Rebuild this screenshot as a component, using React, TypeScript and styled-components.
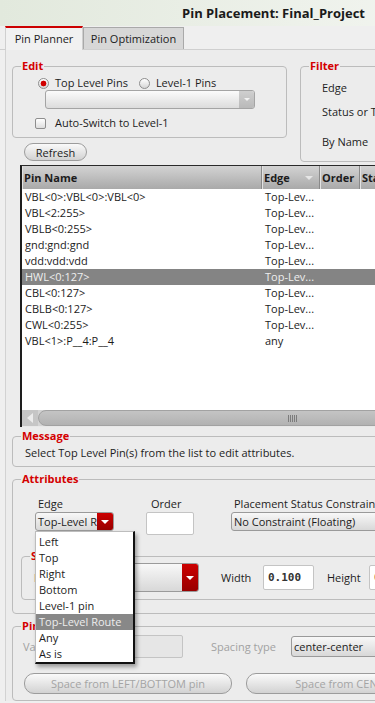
import React from "react";
import styled, { createGlobalStyle } from "styled-components";

const GlobalStyle = createGlobalStyle`
  html, body {
    margin: 0;
    padding: 0;
    background: #efefef;
    overflow: hidden;
  }
  body {
    font-family: "Open Sans", "DejaVu Sans", sans-serif;
    font-size: 11px;
    line-height: 14px;
    color: #1c1c1c;
  }
`;

const Screen = styled.div`
  width: 375px;
  height: 703px;
  overflow: hidden;
  background: #efefef;
`;

const Window = styled.div`
  width: 480px;
`;

const TitleBar = styled.div`
  height: 26px;
  display: flex;
  align-items: center;
  padding-left: 182px;
  background: linear-gradient(to right, #e2e9dd, #f4f6f2);
  font-size: 13px;
  font-weight: 700;
  white-space: nowrap;
  color: #1a1a1a;
`;

const TabStrip = styled.div`
  display: flex;
  align-items: flex-end;
  height: 23px;
  padding-left: 5px;
  border-bottom: 1px solid #cfcfcf;
`;

const Tab = styled.div<{ $active?: boolean }>`
  box-sizing: border-box;
  height: ${(p) => (p.$active ? "24px" : "22px")};
  margin-bottom: ${(p) => (p.$active ? "-1px" : "0")};
  width: ${(p) => (p.$active ? "78px" : "101px")};
  display: flex;
  align-items: center;
  justify-content: center;
  white-space: nowrap;
  font-size: 11px;
  background: ${(p) => (p.$active ? "#f1f1f1" : "#d7d7d7")};
  border: 1px solid ${(p) => (p.$active ? "#cfcfcf" : "#a9a9a9")};
  border-top: ${(p) => (p.$active ? "2px solid #cc0000" : "1px solid #a9a9a9")};
  border-bottom: none;
`;

const Panel = styled.div`
  margin-left: 5px;
  border-left: 1px solid #d2d2d2;
  padding: 9px 0 0 6px;
  background: #ececec;
`;

const TopArea = styled.div`
  display: grid;
  grid-template-columns: 275px 1fr;
  column-gap: 13px;
`;

const Group = styled.fieldset<{ $indent?: number }>`
  margin: 0;
  margin-left: ${(p) => p.$indent ?? 0}px;
  min-width: 0;
  padding: 0;
  border: 1px solid #bcbcbc;
  border-radius: 4px;
`;

const Legend = styled.legend`
  margin-left: 8px;
  padding: 0 1px;
  color: #d40000;
  font-weight: 700;
  font-size: 11px;
  line-height: 14px;
`;

const EditBody = styled.div`
  padding: 3px 0 8px 0;
`;

const RadioRow = styled.div`
  display: flex;
  align-items: center;
  height: 14px;
  padding-left: 25px;
`;

const RadioDot = styled.span<{ $on?: boolean }>`
  box-sizing: border-box;
  width: 11px;
  height: 11px;
  border-radius: 50%;
  border: 1px solid #8e8e8e;
  margin-right: 6px;
  background: ${(p) =>
    p.$on
      ? "radial-gradient(circle, #d00000 0 2.6px, transparent 3.2px), linear-gradient(#ffffff, #d6d6d6)"
      : "linear-gradient(#ffffff, #d6d6d6)"};
`;

const RadioLabel = styled.span`
  margin-right: 11px;
`;

const GrayCombo = styled.div`
  box-sizing: border-box;
  margin-left: 32px;
  width: 210px;
  height: 19px;
  border: 1px solid #a4a4a4;
  border-radius: 3px;
  background: linear-gradient(#fbfbfb, #dcdcdc);
  display: flex;
  justify-content: flex-end;
  overflow: hidden;
`;

const GrayArrow = styled.div`
  width: 15px;
  background: linear-gradient(#cfcfcf, #b9b9b9);
  display: flex;
  align-items: center;
  justify-content: center;
  &::after {
    content: "";
    border-left: 3px solid transparent;
    border-right: 3px solid transparent;
    border-top: 3px solid #f2f2f2;
  }
`;

const CheckRow = styled.label`
  display: flex;
  align-items: center;
  height: 12px;
  margin-top: 8px;
  padding-left: 22px;
`;

const CheckBox = styled.span`
  box-sizing: border-box;
  width: 11px;
  height: 11px;
  border: 1px solid #8e8e8e;
  border-radius: 2px;
  background: linear-gradient(#ffffff, #dedede);
  margin-right: 9px;
`;

const PillButton = styled.button<{ $w: number; $disabled?: boolean }>`
  box-sizing: border-box;
  width: ${(p) => p.$w}px;
  height: ${(p) => (p.$disabled ? "21px" : "18px")};
  padding: 0;
  border: 1px solid #9c9c9c;
  border-radius: 10px;
  background: linear-gradient(#fafafa, #d2d2d2);
  font-family: inherit;
  font-size: 11px;
  color: ${(p) => (p.$disabled ? "#a4a4a4" : "#1c1c1c")};
  white-space: nowrap;
  overflow: hidden;
`;

const RefreshWrap = styled.div`
  margin: 5px 0 0 12px;
`;

const FilterBody = styled.div`
  display: grid;
  grid-template-rows: 24px 24px 36px;
  align-items: center;
  padding: 3px 0 1px 21px;
`;

const Table = styled.div`
  margin: 3px 0 0 8px;
  border-top: 1px solid #2a2a2a;
  border-left: 2px solid #1e1e1e;
  background: #ffffff;
`;

const TableGrid = styled.div`
  display: grid;
  grid-template-columns: 240px 58px 40px 1fr;
`;

const HeadCell = styled.div<{ $sort?: boolean }>`
  height: 23px;
  display: flex;
  align-items: center;
  justify-content: space-between;
  padding-left: 2px;
  padding-right: ${(p) => (p.$sort ? "6px" : "0")};
  font-weight: 700;
  background: linear-gradient(#d3d3d3, #a9a9a9);
  border-right: 1px solid #8a8a8a;
  box-shadow: inset 1px 0 0 #e2e2e2;
`;

const SortArrow = styled.span`
  border-left: 4px solid transparent;
  border-right: 4px solid transparent;
  border-top: 4px solid #e6e6e6;
`;

const BodyCell = styled.div<{ $sel?: boolean }>`
  height: 16px;
  line-height: 16px;
  padding-left: 3px;
  white-space: nowrap;
  overflow: hidden;
  background: ${(p) => (p.$sel ? "#848484" : "#ffffff")};
  color: ${(p) => (p.$sel ? "#eeeeee" : "#1c1c1c")};
`;

const TableEmpty = styled.div`
  height: 61px;
`;

const HScroll = styled.div`
  display: flex;
  height: 16px;
  background: #d4d4d4;
  border-bottom: 1px solid #e8e8e8;
`;

const ScrollLeft = styled.div`
  width: 16px;
  background: #c6c6c6;
  display: flex;
  align-items: center;
  justify-content: center;
  &::after {
    content: "";
    border-top: 5px solid transparent;
    border-bottom: 5px solid transparent;
    border-right: 6px solid #ececec;
  }
`;

const Thumb = styled.div`
  flex: 1;
  box-sizing: border-box;
  border: 1px solid #a2a2a2;
  border-radius: 8px 0 0 8px;
  background: linear-gradient(#c4c4c4, #b2b2b2);
  display: flex;
  align-items: center;
  padding-left: 249px;
`;

const Grip = styled.span`
  width: 9px;
  height: 7px;
  background: repeating-linear-gradient(to right, #7c7c7c 0 1px, transparent 1px 2px);
`;

const MessageGroup = styled(Group)`
  margin-top: 2px;
`;

const MessageText = styled.div`
  padding: 3px 0 6px 12px;
`;

const AttrGroup = styled(Group)`
  margin-top: 5px;
`;

const AttrBody = styled.div`
  padding: 11px 0 13px 0;
`;

const AttrRow = styled.div`
  display: grid;
  grid-template-columns: 111px 85px 240px;
  padding-left: 22px;
`;

const FieldCol = styled.div`
  display: flex;
  flex-direction: column;
  align-items: flex-start;
`;

const FieldLabel = styled.span<{ $pad: number }>`
  padding-left: ${(p) => p.$pad}px;
  height: 15px;
  white-space: nowrap;
`;

const ComboAnchor = styled.div`
  position: relative;
`;

const Combo = styled.div<{ $w: number; $h?: number }>`
  box-sizing: border-box;
  width: ${(p) => p.$w}px;
  height: ${(p) => p.$h ?? 19}px;
  border: 1px solid #9a9a9a;
  border-radius: 3px;
  background: linear-gradient(#f8f8f8, #d8d8d8);
  display: flex;
  align-items: center;
  overflow: hidden;
  white-space: nowrap;
`;

const ComboText = styled.span`
  flex: 1;
  padding-left: 2px;
  overflow: hidden;
`;

const RedArrow = styled.div`
  width: 16px;
  align-self: stretch;
  background: linear-gradient(#cc0000, #980000);
  display: flex;
  align-items: center;
  justify-content: center;
  &::after {
    content: "";
    border-left: 4px solid transparent;
    border-right: 4px solid transparent;
    border-top: 4px solid #ffffff;
  }
`;

const TextInput = styled.div<{ $w: number; $h: number; $disabled?: boolean }>`
  box-sizing: border-box;
  width: ${(p) => p.$w}px;
  height: ${(p) => p.$h}px;
  border: 1px solid #c4c4c4;
  border-radius: 2px;
  background: ${(p) => (p.$disabled ? "#e6e6e6" : "#ffffff")};
  display: flex;
  align-items: center;
  padding-left: 4px;
  font-family: "DejaVu Sans Mono", "Liberation Mono", monospace;
  font-size: 11px;
  font-weight: 700;
  color: #333333;
`;

const SubGroup = styled(Group)`
  margin-top: 14px;
`;

const SizeRow = styled.div`
  display: grid;
  grid-template-columns: 44px 121px 64px 51px 55px 60px;
  align-items: center;
  padding: 0 0 7px 12px;
`;

const InlineLabel = styled.span<{ $pad?: number; $red?: boolean }>`
  padding-left: ${(p) => p.$pad ?? 0}px;
  color: ${(p) => (p.$red ? "#d40000" : "#1c1c1c")};
`;

const PinGroup = styled(Group)`
  margin-top: 5px;
`;

const PinBody = styled.div`
  padding: 2px 0 6px 10px;
`;

const PinRow = styled.div`
  display: grid;
  grid-template-columns: 47px 113px 108px 130px;
  align-items: center;
`;

const MutedLabel = styled.span<{ $pad?: number }>`
  padding-left: ${(p) => p.$pad ?? 0}px;
  color: #a2a2a2;
`;

const ButtonRow = styled.div`
  display: flex;
  gap: 14px;
  margin-top: 15px;
  padding-left: 1px;
`;

const Popup = styled.ul`
  position: absolute;
  top: 100%;
  left: 0;
  z-index: 10;
  box-sizing: border-box;
  width: 100px;
  margin: 0;
  padding: 2px 0 0 0;
  list-style: none;
  background: #ffffff;
  border: 1px solid #bdbdbd;
  border-right: 2px solid #111111;
  border-bottom: 2px solid #111111;
  box-shadow: 2px 3px 4px rgba(0, 0, 0, 0.35);
`;

const PopupItem = styled.li<{ $sel?: boolean }>`
  height: 16px;
  line-height: 16px;
  padding-left: 3px;
  white-space: nowrap;
  background: ${(p) => (p.$sel ? "#888888" : "transparent")};
  color: ${(p) => (p.$sel ? "#ededed" : "#1c1c1c")};
`;

const pins = [
  ["VBL<0>:VBL<0>:VBL<0>", "Top-Lev..."],
  ["VBL<2:255>", "Top-Lev..."],
  ["VBLB<0:255>", "Top-Lev..."],
  ["gnd:gnd:gnd", "Top-Lev..."],
  ["vdd:vdd:vdd", "Top-Lev..."],
  ["HWL<0:127>", "Top-Lev..."],
  ["CBL<0:127>", "Top-Lev..."],
  ["CBLB<0:127>", "Top-Lev..."],
  ["CWL<0:255>", "Top-Lev..."],
  ["VBL<1>:P__4:P__4", "any"],
];

const edgeOptions = ["Left", "Top", "Right", "Bottom", "Level-1 pin", "Top-Level Route", "Any", "As is"];

const App = () => {
  return (
    <Screen>
      <GlobalStyle />
      <Window>
        <TitleBar>Pin Placement: Final_Project</TitleBar>
        <TabStrip>
          <Tab $active>Pin Planner</Tab>
          <Tab>Pin Optimization</Tab>
        </TabStrip>
        <Panel>
          <TopArea>
            <div>
              <Group>
                <Legend>Edit</Legend>
                <EditBody>
                  <RadioRow>
                    <RadioDot $on />
                    <RadioLabel>Top Level Pins</RadioLabel>
                    <RadioDot />
                    <RadioLabel>Level-1 Pins</RadioLabel>
                  </RadioRow>
                  <GrayCombo>
                    <GrayArrow />
                  </GrayCombo>
                  <CheckRow>
                    <CheckBox />
                    Auto-Switch to Level-1
                  </CheckRow>
                </EditBody>
              </Group>
              <RefreshWrap>
                <PillButton $w={63}>Refresh</PillButton>
              </RefreshWrap>
            </div>
            <Group>
              <Legend>Filter</Legend>
              <FilterBody>
                <span>Edge</span>
                <span>Status or Type</span>
                <span>By Name</span>
              </FilterBody>
            </Group>
          </TopArea>

          <Table>
            <TableGrid>
              <HeadCell>Pin Name</HeadCell>
              <HeadCell $sort>
                Edge
                <SortArrow />
              </HeadCell>
              <HeadCell>Order</HeadCell>
              <HeadCell>Status</HeadCell>
              {pins.map(([name, edge], i) => (
                <React.Fragment key={name}>
                  <BodyCell $sel={i === 5}>{name}</BodyCell>
                  <BodyCell $sel={i === 5}>{edge}</BodyCell>
                  <BodyCell $sel={i === 5} />
                  <BodyCell $sel={i === 5} />
                </React.Fragment>
              ))}
            </TableGrid>
            <TableEmpty />
            <HScroll>
              <ScrollLeft />
              <Thumb>
                <Grip />
              </Thumb>
            </HScroll>
          </Table>

          <MessageGroup>
            <Legend>Message</Legend>
            <MessageText>Select Top Level Pin(s) from the list to edit attributes.</MessageText>
          </MessageGroup>

          <AttrGroup>
            <Legend>Attributes</Legend>
            <AttrBody>
              <AttrRow>
                <FieldCol>
                  <FieldLabel $pad={3}>Edge</FieldLabel>
                  <ComboAnchor>
                    <Combo $w={79}>
                      <ComboText>Top-Level Route</ComboText>
                      <RedArrow />
                    </Combo>
                    <Popup>
                      {edgeOptions.map((o) => (
                        <PopupItem key={o} $sel={o === "Top-Level Route"}>
                          {o}
                        </PopupItem>
                      ))}
                    </Popup>
                  </ComboAnchor>
                </FieldCol>
                <FieldCol>
                  <FieldLabel $pad={5}>Order</FieldLabel>
                  <TextInput $w={48} $h={23} />
                </FieldCol>
                <FieldCol>
                  <FieldLabel $pad={3}>Placement Status Constraint</FieldLabel>
                  <Combo $w={220}>
                    <ComboText>No Constraint (Floating)</ComboText>
                  </Combo>
                </FieldCol>
              </AttrRow>

              <SubGroup $indent={8}>
                <Legend>Shape</Legend>
                <SizeRow>
                  <InlineLabel $red>Layer</InlineLabel>
                  <Combo $w={121} $h={29}>
                    <ComboText />
                    <RedArrow />
                  </Combo>
                  <InlineLabel $pad={22}>Width</InlineLabel>
                  <TextInput $w={51} $h={25}>0.100</TextInput>
                  <InlineLabel $pad={13}>Height</InlineLabel>
                  <TextInput $w={60} $h={25}>0.100</TextInput>
                </SizeRow>
              </SubGroup>
            </AttrBody>
          </AttrGroup>

          <PinGroup>
            <Legend>Pin Spacing</Legend>
            <PinBody>
              <PinRow>
                <MutedLabel>Value</MutedLabel>
                <TextInput $w={113} $h={23} $disabled />
                <MutedLabel $pad={28}>Spacing type</MutedLabel>
                <Combo $w={120} $h={21}>
                  <ComboText>center-center</ComboText>
                </Combo>
              </PinRow>
              <ButtonRow>
                <PillButton $w={208} $disabled>
                  Space from LEFT/BOTTOM pin
                </PillButton>
                <PillButton $w={200} $disabled>
                  Space from CENTER
                </PillButton>
              </ButtonRow>
            </PinBody>
          </PinGroup>
        </Panel>
      </Window>
    </Screen>
  );
};

export default App;
